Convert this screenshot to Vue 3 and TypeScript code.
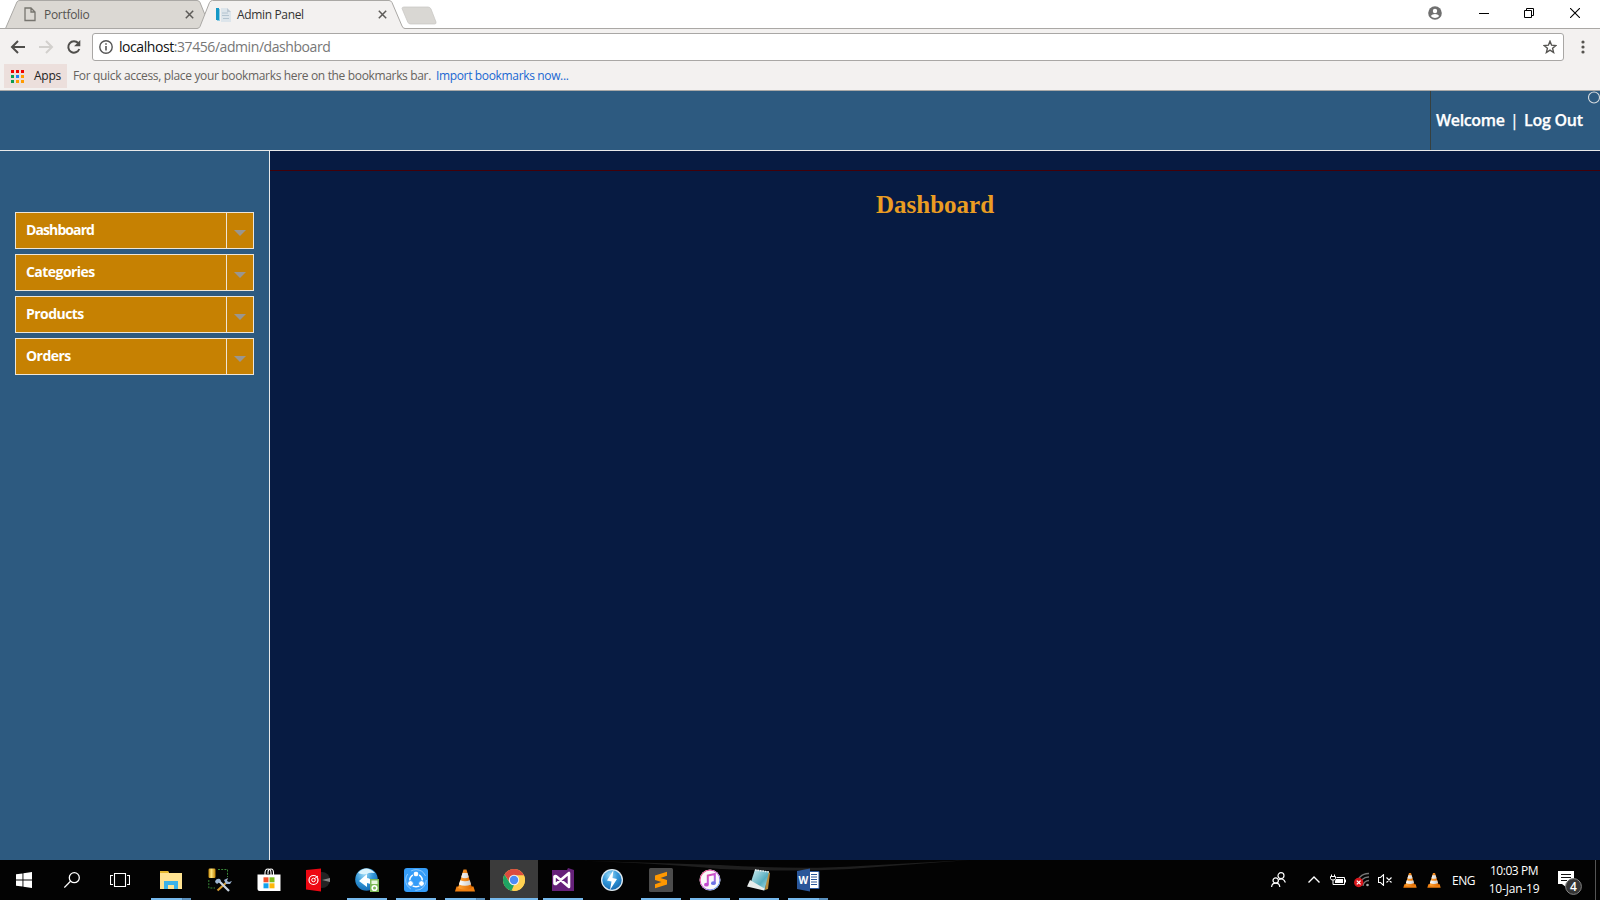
<script setup lang="ts">
interface TaskItem {
  id: string
  state: 'idle' | 'open' | 'multi' | 'active'
}

const menu: string[] = ['Dashboard', 'Categories', 'Products', 'Orders']
const appDots: string[] = ['#f00000', '#f00000', '#f00000', '#0a9d4f', '#1a82f7', '#ff9a00', '#0a9d4f', '#ff9a00', '#ff9a00']
const tasks: TaskItem[] = [
  { id: 'explorer', state: 'multi' },
  { id: 'tools', state: 'idle' },
  { id: 'store', state: 'idle' },
  { id: 'music', state: 'idle' },
  { id: 'sync', state: 'open' },
  { id: 'share', state: 'open' },
  { id: 'vlc', state: 'multi' },
  { id: 'chrome', state: 'active' },
  { id: 'studio', state: 'open' },
  { id: 'bolt', state: 'idle' },
  { id: 'sublime', state: 'open' },
  { id: 'itunes', state: 'open' },
  { id: 'notepad', state: 'open' },
  { id: 'word', state: 'multi' },
]
</script>

<template>
  <div class="screen">
    <svg class="defs" width="0" height="0">
      <defs>
        <linearGradient id="gCone" x1="0" x2="1" y1="0" y2="0">
          <stop offset="0" stop-color="#ffa63a" /><stop offset="1" stop-color="#e06a00" />
        </linearGradient>
        <linearGradient id="gWhite" x1="0" x2="1" y1="0" y2="0">
          <stop offset="0" stop-color="#fff" /><stop offset="1" stop-color="#c9c9c9" />
        </linearGradient>
        <radialGradient id="gBlue" cx=".4" cy=".25" r=".8">
          <stop offset="0" stop-color="#9fdcf8" /><stop offset=".5" stop-color="#3196d8" /><stop offset="1" stop-color="#1567ae" />
        </radialGradient>
        <linearGradient id="gGold" x1="0" x2="1" y1="0" y2="0">
          <stop offset="0" stop-color="#c98a08" /><stop offset=".4" stop-color="#ffe681" /><stop offset="1" stop-color="#c48200" />
        </linearGradient>
        <linearGradient id="gNote" x1="0" x2="1" y1="0" y2="1">
          <stop offset="0" stop-color="#d8f2f5" /><stop offset=".6" stop-color="#58aebf" /><stop offset="1" stop-color="#b9e4ea" />
        </linearGradient>
        <linearGradient id="gTune" gradientUnits="userSpaceOnUse" x1="3" x2="21" y1="3" y2="21">
          <stop offset="0" stop-color="#fb3f6d" /><stop offset=".5" stop-color="#c455d8" /><stop offset="1" stop-color="#3ea8f4" />
        </linearGradient>
        <symbol id="cone" viewBox="0 0 20 24">
          <path d="M1.500 18.500h17l1.500 5H0z" fill="#ef7f10" />
          <path d="M8.500 1.500h3l5.500 18.500q-7 3.500-14 0z" fill="url(#gCone)" />
          <path d="M7.500 5h5l1.300 4.300q-3.800 1.700-7.600 0zM5.200 12.300q4.800 2 9.600 0l1.300 4.200q-6.100 2.700-12.200 0z" fill="url(#gWhite)" />
        </symbol>
      </defs>
    </svg>

    <header class="chrome">
      <div class="tabstrip">
        <svg class="tab-shapes" width="450" height="29" viewBox="0 0 450 29">
          <path d="M5.500 28.500 17 1.800Q18 .500 20 .500H197q2 0 3 2l10.500 26z" fill="#dbd8d3" stroke="#aaa8a5" />
          <path d="M402 8.500q0-1.500 2-1.500h24q2 0 3 2l5 13q.500 2-1.500 2h-24q-2 0-2.800-2z" fill="#d9d7d3" stroke="#c6c4c1" stroke-width=".7" />
          <path d="M0 28.500H197q2 0 3-2L209.500 2.500q1-2 3-2H389q2 0 3 2L402 26q1 2.500 3 2.500h45V30H0z" fill="#f3f1f0" />
          <path d="M0 28.500H197q2 0 3-2L209.500 2.500q1-2 3-2H389q2 0 3 2L402 26q1 2.500 3 2.500h45" fill="none" stroke="#aaa8a5" />
        </svg>
        <div class="tab first">
          <svg width="12" height="15" viewBox="0 0 12 15"><path d="M1 1h6l4 4v8.500H1zM7 1v4h4" fill="none" stroke="#77756f" stroke-width="1.300" /></svg>
          <span class="tab-title portfolio">Portfolio</span>
          <svg width="9" height="9" viewBox="0 0 9 9"><path d="M.800.800l7.400 7.400M8.200.800.800 8.200" stroke="#5d5b58" stroke-width="1.500" /></svg>
        </div>
        <div class="tab second">
          <svg width="16" height="16" viewBox="0 0 16 16">
            <path d="M6 1h6l4 4v10H6z" fill="#dde5eb" /><path d="M12 1v4h4" fill="#bdc9d3" />
            <path d="M7 6h6M7 8.500h7M8 11.500h6" stroke="#b4c4d0" />
            <path d="M1 1h3v12H1z" fill="#1598c6" /><path d="M4 2h1v12H2v-1h2z" fill="#8ecbe2" />
          </svg>
          <span class="tab-title admin">Admin Panel</span>
          <svg width="9" height="9" viewBox="0 0 9 9"><path d="M.800.800l7.400 7.400M8.200.800.800 8.200" stroke="#5d5b58" stroke-width="1.500" /></svg>
        </div>
        <div class="window-controls">
          <svg width="14" height="14" viewBox="0 0 14 14"><circle cx="7" cy="7" r="6.800" fill="#6f6f6f" /><circle cx="7" cy="5" r="2.200" fill="#fff" /><path d="M2.700 10q1.500-2 4.300-2t4.300 2Q9.500 12 7 12t-4.300-2z" fill="#fff" /></svg>
          <svg width="10" height="10" viewBox="0 0 10 10"><path d="M0 5.500h10" stroke="#000" /></svg>
          <svg width="10" height="10" viewBox="0 0 10 10"><path d="M.500 2.500h7v7h-7zM2.500 2.500v-2h7v7h-2" fill="none" stroke="#000" /></svg>
          <svg width="10" height="10" viewBox="0 0 10 10"><path d="M0 0l10 10M10 0 0 10" stroke="#000" stroke-width="1.100" /></svg>
        </div>
      </div>

      <div class="toolbar">
        <svg class="nav" width="84" height="16" viewBox="0 0 84 16">
          <path d="M15 8H2.500M8 2 2 8l6 6" fill="none" stroke="#4f4e4b" stroke-width="2" />
          <path d="M29 8h12.500M36 2l6 6-6 6" fill="none" stroke="#d2d0cd" stroke-width="2" />
          <path d="M68.300 4.200A5.700 5.700 0 1 0 69.300 10" fill="none" stroke="#4f4e4b" stroke-width="2" /><path d="M70.300 1v6.200h-6.200z" fill="#4f4e4b" />
        </svg>
        <div class="omnibox">
          <svg width="14" height="14" viewBox="0 0 14 14"><circle cx="7" cy="7" r="6.200" fill="none" stroke="#555" stroke-width="1.400" /><path d="M7 6v4.500M7 3.200v1.600" stroke="#555" stroke-width="1.600" /></svg>
          <span class="url"><b>localhost</b>:37456/admin/dashboard</span>
          <svg class="star" width="14" height="14" viewBox="0 0 14 14"><path d="M7 1.200l1.600 4 4.300.300-3.300 2.800 1 4.200L7 10.200l-3.600 2.300 1-4.200L1.100 5.500l4.300-.300z" fill="none" stroke="#555451" stroke-width="1.400" /></svg>
        </div>
        <svg class="dots" width="4" height="14" viewBox="0 0 4 14"><g fill="#55534f"><circle cx="2" cy="2" r="1.600" /><circle cx="2" cy="7" r="1.600" /><circle cx="2" cy="12" r="1.600" /></g></svg>
      </div>

      <div class="bookmarks">
        <div class="apps">
          <span class="app-grid"><i v-for="(c, i) in appDots" :key="i" :style="{ background: c }"></i></span>
          <span class="apps-label">Apps</span>
        </div>
        <span class="hint">For quick access, place your bookmarks here on the bookmarks bar.</span>
        <a class="import">Import bookmarks now...</a>
      </div>
    </header>

    <div class="site-header">
      <div class="account"><span class="welcome">Welcome</span><span class="bar">|</span><span class="logout">Log Out</span></div>
      <svg class="ring" width="12" height="13" viewBox="0 0 12 13"><circle cx="6" cy="6.500" r="5.500" fill="none" stroke="#d5dadd" stroke-width="1.100" /></svg>
    </div>

    <div class="body">
      <aside class="sidebar">
        <div v-for="item in menu" :key="item" class="menu-item">
          <span class="menu-label">{{ item }}</span>
          <span class="menu-toggle"><i></i></span>
        </div>
      </aside>
      <main class="content">
        <h1>Dashboard</h1>
      </main>
    </div>

    <footer class="taskbar">
      <svg class="sheen" width="1600" height="12" viewBox="0 0 1600 12"><path d="M560 0L720 5Q800 10 860 6L970 0 850 9Q790 12 720 9Q660 3 560 0z" fill="#1f1f1f" /></svg>
      <div class="sys">
        <svg width="16" height="16" viewBox="0 0 16 16"><path d="M0 2.300 6.500 1.400v6.100H0zM7.400 1.200 16 0v7.500H7.400zM0 8.500h6.500v6.100L0 13.700zM7.400 8.500H16V16l-8.600-1.200z" fill="#fff" /></svg>
      </div>
      <div class="sys">
        <svg width="16" height="16" viewBox="0 0 16 16"><circle cx="10.300" cy="5.700" r="5" fill="none" stroke="#fff" stroke-width="1.300" /><path d="M6.500 9.300.300 15.500" stroke="#fff" stroke-width="1.300" /></svg>
      </div>
      <div class="sys">
        <svg width="20" height="14" viewBox="0 0 20 14"><path d="M4.500.500h11v13h-11zM3 2.500H.500v9H3M17 2.500h2.500v9H17" fill="none" stroke="#fff" stroke-width="1.100" /></svg>
      </div>
      <div class="tasks">
        <div v-for="t in tasks" :key="t.id" class="task" :class="t.state">
          <svg width="24" height="24" viewBox="0 0 24 24">
            <g v-if="t.id === 'explorer'">
              <path d="M1 3h8l1 2h13v16H1z" fill="#ffe391" /><path d="M1 3h8l1 2H1z" fill="#e5b82e" /><path d="M5 13h14v8h-4v-4H9v4H5z" fill="#3bb2e8" />
            </g>
            <g v-else-if="t.id === 'tools'">
              <path d="M10 1.500h9.500V9M.800 12v8H7" fill="none" stroke="#398738" stroke-dasharray="2 1.200" />
              <rect x=".500" y=".500" width="7" height="9.500" rx="1.200" fill="url(#gGold)" />
              <path d="m19 14-9.500 8.500" stroke="#d49a31" stroke-width="2.200" /><path d="m10 12 11 11" stroke="#c9d4df" stroke-width="2.300" />
              <path d="M7 14q1-4 5-3l1 2-4 3zM16 12l4-2-1 3 2 1 3-1-2 3h-4z" fill="#9db5d2" />
            </g>
            <g v-else-if="t.id === 'store'">
              <path d="M8 7V5q0-4 3-4t3 4v2M11 6V4q0-3 3-3 2.500 0 2.500 4v2" fill="none" stroke="#fff" stroke-width="1.100" /><path d="M.500 6.500h23V23h-21q-2 0-2-2z" fill="#fff" />
              <path d="M6.500 9.300h5v5h-5z" fill="#f2502a" /><path d="M12.500 9.300h5v5h-5z" fill="#7dbb19" /><path d="M6.500 15.300h5v5h-5z" fill="#13a2ee" /><path d="M12.500 15.300h5v5h-5z" fill="#fdb80a" />
            </g>
            <g v-else-if="t.id === 'music'">
              <circle cx="16" cy="12" r="8" fill="#232323" /><path d="M16 12l8-2v4z" fill="#888" />
              <path d="M0 2 15 .500V23.500L0 21.500z" fill="#ed0712" /><circle cx="7.500" cy="12" r="4.500" fill="none" stroke="#fff" stroke-width="1.200" /><circle cx="7.500" cy="12" r="1.800" fill="none" stroke="#fff" /><path d="m8 11 4-3" stroke="#fff" />
            </g>
            <g v-else-if="t.id === 'sync'">
              <circle cx="11.500" cy="11.500" r="11.300" fill="url(#gBlue)" /><path d="M3 5q8-9 17 0-6-1-8 1-4 1-9-1z" fill="#d9f3fd" />
              <path d="M4 13 12 6v4q5 0 5 8-2-3-5-3v4z" fill="#fff" /><rect x="15" y="11" width="9" height="13" fill="#7eb958" /><path d="M16.500 12.500h6v3.500h-6z" fill="#e8f6df" /><circle cx="19.500" cy="20" r="2.300" fill="none" stroke="#fff" stroke-width="1.600" />
            </g>
            <g v-else-if="t.id === 'share'">
              <rect width="24" height="24" rx="3" fill="#349cf8" /><circle cx="12" cy="12" r="10.300" fill="none" stroke="#98cfff" stroke-width=".9" stroke-dasharray="17 4.600" />
              <circle cx="12" cy="12.500" r="6.300" fill="none" stroke="#fff" stroke-width="1.500" />
              <g fill="#fff" stroke="#349cf8" stroke-width="1"><circle cx="12" cy="6" r="2.900" /><circle cx="6.500" cy="15.500" r="2.900" /><circle cx="17.500" cy="15.500" r="2.900" /></g>
            </g>
            <use v-else-if="t.id === 'vlc'" href="#cone" x="2" y="0" width="20" height="24" />
            <g v-else-if="t.id === 'chrome'">
              <circle cx="12" cy="12" r="11" fill="#ffd151" />
              <path d="M2.500 6.500A11 11 0 0 1 21.500 6.500L22 7.500H12L7.500 14z" fill="#db4c3f" /><path d="M2.500 6.500 7.500 14.500 12 17l-2.500 5.800A11 11 0 0 1 2.500 6.500z" fill="#1fa463" /><path d="M22 7.500A11 11 0 0 1 11 23l5.500-9L14 7.500z" fill="#ffd151" />
              <circle cx="12" cy="12" r="5.200" fill="#f3f3f3" /><circle cx="12" cy="12" r="4.200" fill="#4c8bf5" />
            </g>
            <g v-else-if="t.id === 'studio'">
              <path d="M1 2h15l1-2 6 2v21H1z" fill="#66217a" /><path d="M3.500 8.500v7q1 1 2 0L18 5v14L5.500 8.500q-1-1-2 0z" fill="none" stroke="#fff" stroke-width="2.600" stroke-linejoin="round" />
            </g>
            <g v-else-if="t.id === 'bolt'">
              <circle cx="12" cy="12" r="11" fill="#dfeaf1" /><circle cx="12" cy="12" r="9.700" fill="url(#gBlue)" /><path d="M13.500 2 7 12.500l4.500 1L10 22l7-11-4.500-1z" fill="#fff" />
            </g>
            <g v-else-if="t.id === 'sublime'">
              <rect width="24" height="24" rx="1.500" fill="#4c4c4c" /><path d="m6 7.500 12-3.700v4L11.500 10 18 12v4.500L6 20.300v-4l6.500-2.200L6 12z" fill="#ff9800" />
            </g>
            <g v-else-if="t.id === 'itunes'">
              <circle cx="12" cy="12" r="10.500" fill="#fafafa" /><circle cx="12" cy="12" r="9.900" fill="none" stroke="url(#gTune)" stroke-width="1" />
              <path d="M9.800 16.500V7.500l7-1.500v9" fill="none" stroke="url(#gTune)" stroke-width="2" /><ellipse cx="8.400" cy="16.700" rx="2.400" ry="1.900" fill="#c34bd0" /><ellipse cx="15.400" cy="15.200" rx="2.400" ry="1.900" fill="#6c74e5" />
            </g>
            <g v-else-if="t.id === 'notepad'">
              <path d="M20 3l3 2-2 16-3 1z" fill="#b88b3c" /><path d="M8 1.500 22 3.500 17.500 22.500 3 17z" fill="url(#gNote)" /><path d="M3 12 0 18.500l17 4 .500-2z" fill="#e7eceb" /><path d="m8 2 14 2" stroke="#eee" stroke-width="1.500" stroke-dasharray="1.500 1" />
            </g>
            <g v-else>
              <path d="M13 3.500h10v17H13z" fill="#fff" stroke="#2a5699" /><path d="M15 6.500h6M15 9h6M15 11.500h6M15 14h6M15 16.500h6" stroke="#2a5699" /><path d="M1 3 14 .500v23L1 21z" fill="#2a5699" />
              <text x="7.400" y="16" text-anchor="middle" class="word-letter">W</text>
            </g>
          </svg>
        </div>
      </div>

      <div class="tray">
        <svg class="people" width="15" height="16" viewBox="0 0 15 16"><g fill="none" stroke="#fff" stroke-width="1.200"><circle cx="10" cy="3.700" r="3" /><circle cx="4.700" cy="8.500" r="2.700" /><path d="M.600 15q.300-3.800 4.100-3.800T8.800 15M7.800 7.500q4.500-2 6.600 3" /></g></svg>
        <svg class="chev" width="12" height="8" viewBox="0 0 12 8"><path d="m.500 6.500 5.500-5.500 5.500 5.500" fill="none" stroke="#fff" stroke-width="1.400" /></svg>
        <svg class="battery" width="16" height="12" viewBox="0 0 16 12"><path d="M1.500.500v2M4.500.500v2M.500 2.500h5v2q0 1.500-2.500 1.500T.500 4.500zM3 6v4.500h11.500v-7H6.500M15.500 5.500v3" fill="none" stroke="#fff" /><path d="M6 5h7v4H5V7z" fill="#fff" /></svg>
        <svg class="wifi" width="16" height="16" viewBox="0 0 16 16"><g fill="none" stroke="#777" stroke-width="1.300"><path d="M2.500 14A12 12 0 0 1 15 1.500M5.500 14A9 9 0 0 1 15 5M9 14a6 6 0 0 1 6-5.500" /></g><circle cx="13.500" cy="13" r="1.300" fill="#aaa" /><circle cx="4.700" cy="10.500" r="4.700" fill="#d9161c" /><path d="m2.800 8.600 3.800 3.800M6.600 8.600l-3.800 3.800" stroke="#fff" stroke-width="1.300" /></svg>
        <svg class="mute" width="15" height="12" viewBox="0 0 15 12"><path d="M.500 3.500H2.500L5.500.700v10.600L2.500 8.500h-2zM8.500 3.500l5 5M13.500 3.500l-5 5" fill="none" stroke="#fff" stroke-width="1.100" /></svg>
        <svg class="cone1" width="14" height="16"><use href="#cone" width="14" height="16" /></svg>
        <svg class="cone2" width="14" height="16"><use href="#cone" width="14" height="16" /></svg>
        <span class="lang">ENG</span>
        <div class="clock"><span class="time">10:03 PM</span><span class="date">10-Jan-19</span></div>
        <div class="notify">
          <svg width="24" height="24" viewBox="0 0 24 24"><path d="M0 0h16v13H8v3l-4-3H0z" fill="#fff" /><path d="M3 3.500h10M3 6.500h10M3 9.500h6" stroke="#111" /><circle cx="15.500" cy="15.500" r="7.900" fill="#343434" stroke="#828282" /></svg>
          <b>4</b>
        </div>
      </div>
    </footer>
  </div>
</template>

<style>
html, body { margin: 0; overflow: hidden; }
</style>

<style scoped>
* { box-sizing: border-box; }
.screen { width: 1600px; height: 900px; display: flex; flex-direction: column; overflow: hidden; font-family: "Open Sans", "Noto Sans", sans-serif; white-space: nowrap; }
.defs { position: absolute; }
svg { display: block; flex: none; }
.chrome { height: 91px; flex: none; background: #f3f1f0; border-bottom: 1px solid #aaa9a8; }
.tabstrip { position: relative; height: 29px; background: #fff; border-bottom: 1px solid #aaa8a5; display: flex; }
.tab-shapes { position: absolute; left: 0; top: 0; }
.tab { position: relative; height: 29px; display: flex; align-items: center; color: #333; font-size: 12px; }
.tab.first { width: 194px; padding-left: 24px; color: #55534f; }
.tab.second { width: 193px; padding-left: 21px; }
.tab-title { flex: 1; }
.portfolio { padding-left: 8px; letter-spacing: -0.3px; }
.admin { padding-left: 6px; letter-spacing: -0.35px; }
.window-controls { margin-left: auto; width: 172px; display: flex; align-items: center; padding: 0 20px 3px 0; }
.window-controls svg:nth-child(2) { margin-left: 37px; }
.window-controls svg:nth-child(3) { margin-left: 35px; }
.window-controls svg:nth-child(4) { margin-left: 36px; }
.toolbar { height: 36px; display: flex; align-items: center; padding-left: 10px; }
.nav { margin-right: -2px; }
.omnibox { width: 1472px; height: 28px; border: 1px solid #a9a7a5; border-radius: 3px; background: #fff; display: flex; align-items: center; padding: 0 6px; }
.url { font-size: 14px; margin-left: 6px; color: #777; letter-spacing: -0.43px; line-height: 20px; }
.url b { font-weight: 400; color: #111; }
.star { margin-left: auto; }
.dots { margin-left: 17px; }
.bookmarks { height: 25px; display: flex; align-items: flex-start; font-size: 12px; padding-left: 4px; line-height: 24px; margin-top: -1px; color: #66635e; }
.apps { width: 63px; height: 24px; background: #ecdfdc; display: flex; align-items: center; padding-left: 7px; color: #222; }
.app-grid { display: grid; grid-template-columns: repeat(3, 3px); gap: 2px; }
.app-grid i { width: 3px; height: 3px; }
.apps-label { margin-left: 10px; letter-spacing: -0.25px; }
.hint { margin-left: 6px; width: 363px; letter-spacing: -0.34px; }
.import { color: #1967d2; letter-spacing: -0.35px; }
.site-header { position: relative; height: 60px; flex: none; background: #2d5a80; border-bottom: 1px solid #e9eaea; display: flex; justify-content: flex-end; }
.account { width: 170px; border-left: 1px solid #37403f; display: flex; align-items: center; padding-left: 5px; padding-bottom: 1px; color: #fff; font-weight: 600; font-size: 16px; -webkit-text-stroke: 0.25px #fff; }
.welcome { width: 74px; letter-spacing: -0.35px; }
.bar { width: 14px; font-weight: 400; }
.logout { letter-spacing: -0.25px; }
.ring { position: absolute; right: 0; top: 0; }
.body { flex: 1; display: flex; min-height: 0; }
.sidebar { width: 270px; background: #2d5a80; border-right: 1px solid #e9eaea; padding: 61px 15px 0; display: flex; flex-direction: column; gap: 5px; }
.menu-item { height: 37px; border: 1px solid #eee5d6; background: #c68102; display: flex; color: #fff; }
.menu-label { flex: 1; font-size: 14px; font-weight: 700; line-height: 34px; padding-left: 10px; letter-spacing: -0.55px; }
.menu-item:first-child .menu-label { letter-spacing: -0.9px; }
.menu-toggle { width: 27px; border-left: 1px solid #eee5d6; display: flex; justify-content: center; padding-top: 17px; }
.menu-toggle i { width: 0; height: 0; border: 6px solid transparent; border-top-color: #999690; border-bottom: 0; }
.content { flex: 1; background: #071b42; padding-top: 19px; }
.content h1 { margin: 0; border-top: 1px solid #430008; padding-top: 19px; text-align: center; font: bold 25px/30px "Liberation Serif", serif; color: #eb9d22; }
.taskbar { position: relative; height: 40px; flex: none; background: #030303; display: flex; color: #fff; }
.sheen { position: absolute; left: 0; top: 0; }
.sys { position: relative; width: 48px; display: flex; align-items: center; justify-content: center; }
.tasks { position: relative; display: flex; margin-left: 3px; }
.task { position: relative; width: 48px; margin-right: 1px; display: flex; align-items: center; justify-content: center; }
.task.active { background: #3b3b3b; }
.task.open::after, .task.multi::after, .task.active::after { content: ""; position: absolute; bottom: 0; left: 4px; width: 40px; height: 2px; background: #76b9ed; }
.task.multi::after { background: linear-gradient(to right, #76b9ed 31px, #4a7ba5 31px, #5a90bd 32px); }
.task.active::after { left: 0; width: 48px; }
.word-letter { font: bold 10px "Open Sans", sans-serif; fill: #fff; }
.tray { position: relative; margin-left: auto; width: 330px; display: flex; align-items: center; }
.people { margin-left: 1px; }
.chev { margin-left: 22px; }
.battery { margin-left: 10px; }
.wifi { margin-left: 8px; }
.mute { margin-left: 8px; }
.cone1 { margin-left: 10px; }
.cone2 { margin-left: 10px; }
.lang { margin-left: 11px; width: 24px; font-size: 12px; letter-spacing: -0.5px; }
.clock { margin-left: 11px; width: 54px; font-size: 12px; line-height: 18px; display: flex; flex-direction: column; align-items: center; }
.time { letter-spacing: -0.45px; }
.date { letter-spacing: -0.2px; }
.notify { position: relative; margin-left: 17px; margin-top: 5px; }
.notify b { position: absolute; left: 12px; top: 7px; font-size: 12px; line-height: 17px; font-weight: 600; }
.tray::after { content: ""; position: absolute; right: 4px; top: 0; width: 1px; height: 40px; background: #555; }
</style>
